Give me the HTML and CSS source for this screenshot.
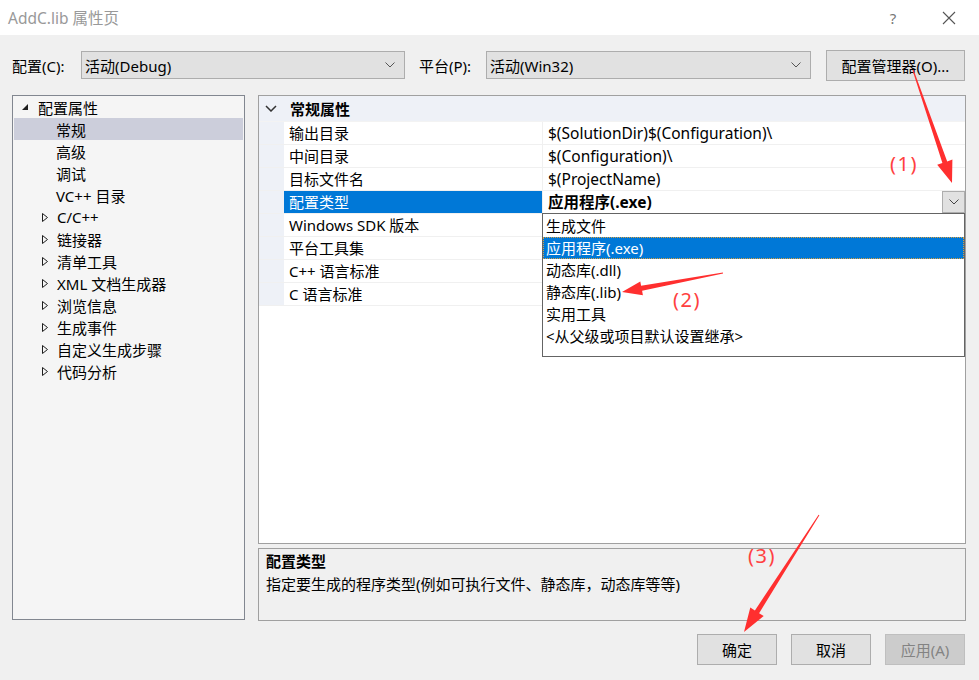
FILE: index.html
```html
<!DOCTYPE html>
<html>
<head>
  <title>AddC.lib 属性页</title>
  <link rel="stylesheet" href="styles.css">
</head>
<body>
<div class="dialog">
  <div class="titlebar">
    <span class="title">AddC.lib 属性页</span>
    <span class="tb-help">?</span>
    <span class="tb-close">
      <svg width="14" height="14" viewBox="0 0 14 14"><path d="M1 1 L13 13 M13 1 L1 13" stroke="#555" stroke-width="1.1" fill="none"/></svg>
    </span>
  </div>

  <div class="toolbar">
    <span class="label">配置(C):</span>
    <div class="combo combo-config">
      <span>活动(Debug)</span>
      <svg class="chev" width="10" height="6" viewBox="0 0 10 6"><path d="M0.5 0.5 L5 5 L9.5 0.5" stroke="#555" fill="none"/></svg>
    </div>
    <span class="label label-platform">平台(P):</span>
    <div class="combo combo-platform">
      <span>活动(Win32)</span>
      <svg class="chev" width="10" height="6" viewBox="0 0 10 6"><path d="M0.5 0.5 L5 5 L9.5 0.5" stroke="#555" fill="none"/></svg>
    </div>
    <button class="btn btn-manager">配置管理器(O)...</button>
  </div>

  <div class="main">
    <div class="tree">
      <div class="tnode root">
        <svg class="tw" width="8" height="8" viewBox="0 0 8 8"><path d="M7 1 L7 7 L1 7 Z" fill="#1e1e1e"/></svg>
        <span>配置属性</span>
      </div>
      <div class="tnode leaf selected"><span>常规</span></div>
      <div class="tnode leaf"><span>高级</span></div>
      <div class="tnode leaf"><span>调试</span></div>
      <div class="tnode leaf"><span>VC++ 目录</span></div>
      <div class="tnode branch">
        <svg class="tw" width="8" height="11" viewBox="0 0 8 11"><path d="M1.5 1.5 L6.5 5.5 L1.5 9.5 Z" fill="none" stroke="#1e1e1e"/></svg>
        <span>C/C++</span>
      </div>
      <div class="tnode branch">
        <svg class="tw" width="8" height="11" viewBox="0 0 8 11"><path d="M1.5 1.5 L6.5 5.5 L1.5 9.5 Z" fill="none" stroke="#1e1e1e"/></svg>
        <span>链接器</span>
      </div>
      <div class="tnode branch">
        <svg class="tw" width="8" height="11" viewBox="0 0 8 11"><path d="M1.5 1.5 L6.5 5.5 L1.5 9.5 Z" fill="none" stroke="#1e1e1e"/></svg>
        <span>清单工具</span>
      </div>
      <div class="tnode branch">
        <svg class="tw" width="8" height="11" viewBox="0 0 8 11"><path d="M1.5 1.5 L6.5 5.5 L1.5 9.5 Z" fill="none" stroke="#1e1e1e"/></svg>
        <span>XML 文档生成器</span>
      </div>
      <div class="tnode branch">
        <svg class="tw" width="8" height="11" viewBox="0 0 8 11"><path d="M1.5 1.5 L6.5 5.5 L1.5 9.5 Z" fill="none" stroke="#1e1e1e"/></svg>
        <span>浏览信息</span>
      </div>
      <div class="tnode branch">
        <svg class="tw" width="8" height="11" viewBox="0 0 8 11"><path d="M1.5 1.5 L6.5 5.5 L1.5 9.5 Z" fill="none" stroke="#1e1e1e"/></svg>
        <span>生成事件</span>
      </div>
      <div class="tnode branch">
        <svg class="tw" width="8" height="11" viewBox="0 0 8 11"><path d="M1.5 1.5 L6.5 5.5 L1.5 9.5 Z" fill="none" stroke="#1e1e1e"/></svg>
        <span>自定义生成步骤</span>
      </div>
      <div class="tnode branch">
        <svg class="tw" width="8" height="11" viewBox="0 0 8 11"><path d="M1.5 1.5 L6.5 5.5 L1.5 9.5 Z" fill="none" stroke="#1e1e1e"/></svg>
        <span>代码分析</span>
      </div>
    </div>

    <div class="right">
      <div class="grid">
        <div class="cat">
          <svg class="cat-chev" width="12" height="7" viewBox="0 0 12 7"><path d="M1 1 L6 6 L11 1" stroke="#333" stroke-width="1.5" fill="none"/></svg>
          <span>常规属性</span>
        </div>
        <div class="prow"><div class="pname">输出目录</div><div class="pval">$(SolutionDir)$(Configuration)\</div></div>
        <div class="prow"><div class="pname">中间目录</div><div class="pval">$(Configuration)\</div></div>
        <div class="prow"><div class="pname">目标文件名</div><div class="pval">$(ProjectName)</div></div>
        <div class="prow active">
          <div class="pname">配置类型</div>
          <div class="pval">
            <b>应用程序(.exe)</b>
            <span class="dd-btn">
              <svg width="10" height="6" viewBox="0 0 10 6"><path d="M0.5 0.5 L5 5 L9.5 0.5" stroke="#444" fill="none"/></svg>
            </span>
            <div class="dd-list">
              <div class="dd-item">生成文件</div>
              <div class="dd-item current">应用程序(.exe)</div>
              <div class="dd-item">动态库(.dll)</div>
              <div class="dd-item">静态库(.lib)</div>
              <div class="dd-item">实用工具</div>
              <div class="dd-item">&lt;从父级或项目默认设置继承&gt;</div>
            </div>
          </div>
        </div>
        <div class="prow"><div class="pname">Windows SDK 版本</div><div class="pval"></div></div>
        <div class="prow"><div class="pname">平台工具集</div><div class="pval"></div></div>
        <div class="prow"><div class="pname">C++ 语言标准</div><div class="pval"></div></div>
        <div class="prow"><div class="pname">C 语言标准</div><div class="pval"></div></div>
      </div>
      <div class="desc">
        <div class="desc-title">配置类型</div>
        <div>指定要生成的程序类型(例如可执行文件、静态库，动态库等等)</div>
      </div>
    </div>
  </div>

  <div class="footer">
    <button class="btn">确定</button>
    <button class="btn">取消</button>
    <button class="btn" disabled>应用(A)</button>
  </div>

  <!-- red annotation arrows drawn over the dialog -->
  <svg class="notes" width="979" height="680" viewBox="0 0 979 680">
    <polygon fill="#ff2f2f" points="912.5,70.2 942.4,163 937.2,164.8 952,183 952.4,159.6 947.2,161.4 913.5,69.8"/>
    <polygon fill="#ff2f2f" points="722.9,272.5 641.1,285.8 640.3,281.4 622,292 642.9,295.2 642.1,290.8 723.1,273.5"/>
    <polygon fill="#ff2f2f" points="818.6,514.7 754.9,610.5 750.3,607.5 744,632 763.7,616.1 759.1,613.2 819.4,515.3"/>
  </svg>
  <span class="note n1">(1)</span>
  <span class="note n2">(2)</span>
  <span class="note n3">(3)</span>
</div>
</body>
</html>
```

FILE: styles.css
```css
html, body {
  margin: 0;
  padding: 0;
}

body {
  font-family: "Noto Sans", "Noto Sans CJK SC", sans-serif;
  font-size: 15px;
  color: #000;
  background: #f0f0f0;
}

.dialog {
  position: relative;
  width: 979px;
  height: 680px;
  overflow: hidden;
  background: #f0f0f0;
}

/* title bar */
.titlebar {
  height: 35px;
  background: #fff;
  display: flex;
  align-items: center;
}
.title {
  margin-left: 8px;
  color: #999;
  flex: 1;
  font-size: 15.5px;
}
.tb-help {
  color: #777;
  width: 20px;
  text-align: center;
  margin-right: 39px;
}
.tb-close {
  display: flex;
  margin-right: 23px;
}

/* config / platform row */
.toolbar {
  display: flex;
  align-items: center;
  height: 60px;
  padding: 0 14px 0 12px;
}
.label {
  width: 69px;
}
.label-platform {
  margin-left: 14px;
  width: 67px;
}
.combo {
  box-sizing: border-box;
  height: 28px;
  background: #e1e1e1;
  border: 1px solid #adadad;
  display: flex;
  align-items: center;
  justify-content: space-between;
  padding: 0 9px 0 3px;
}
.combo-config {
  width: 324px;
}
.combo-platform {
  width: 325px;
}
.btn {
  box-sizing: border-box;
  font: inherit;
  height: 31px;
  background: #e1e1e1;
  border: 1px solid #adadad;
  color: #000;
  padding: 0;
}
.btn-manager {
  margin-left: 15px;
  width: 139px;
}

/* tree + grid */
.main {
  display: flex;
  align-items: flex-start;
  padding-left: 12px;
}
.tree {
  box-sizing: border-box;
  width: 233px;
  height: 525px;
  background: #f5f5f5;
  border: 1px solid #828790;
  padding: 0 1px;
}
.tnode {
  height: 22px;
  display: flex;
  align-items: center;
}
.tnode.root .tw {
  margin-left: 7px;
  margin-right: 9px;
}
.tnode.leaf {
  padding-left: 42px;
}
.tnode.branch .tw {
  margin-left: 27px;
  margin-right: 8px;
}
.tnode.selected {
  background: #cccedb;
}

.right {
  margin-left: 13px;
  width: 708px;
}
.grid {
  box-sizing: border-box;
  height: 449px;
  border: 1px solid #a0a0a0;
  background: #fff;
  position: relative;
}
.cat {
  height: 25px;
  display: flex;
  align-items: center;
  background: #eef1f7;
  font-weight: bold;
  border-bottom: 1px solid #f3f3f3;
}
.cat-chev {
  margin-left: 6px;
  margin-right: 13px;
}
.prow {
  display: flex;
  height: 22px;
  border-bottom: 1px solid #f0f0f0;
  background: #eef1f7;
  padding-left: 25px;
}
.pname {
  width: 253px;
  padding-left: 5px;
  background: #fff;
  border-right: 1px solid #f0f0f0;
  line-height: 22px;
}
.pval {
  flex: 1;
  background: #fff;
  padding-left: 5px;
  line-height: 22px;
  position: relative;
  font-size: 15.5px;
}
.prow.active .pname {
  background: #0078d7;
  color: #fff;
}
.dd-btn {
  position: absolute;
  right: 0;
  top: 0;
  box-sizing: border-box;
  width: 23px;
  height: 22px;
  background: #e1e1e1;
  border: 1px solid #adadad;
  display: flex;
  align-items: center;
  justify-content: center;
}
.dd-list {
  position: absolute;
  left: -1px;
  right: 0;
  top: 22px;
  height: 144px;
  box-sizing: border-box;
  background: #fff;
  border: 1px solid #646464;
  padding-top: 1px;
  z-index: 2;
  font-size: 15px;
}
.dd-item {
  height: 22px;
  line-height: 22px;
  padding-left: 3px;
}
.dd-item.current {
  background: #0078d7;
  color: #fff;
  outline: 1px dotted #d9a040;
  outline-offset: -1px;
}

.desc {
  box-sizing: border-box;
  margin-top: 4px;
  height: 73px;
  border: 1px solid #a0a0a0;
  padding: 1px 7px;
  line-height: 23px;
}
.desc-title {
  font-weight: bold;
}

/* bottom buttons */
.footer {
  display: flex;
  justify-content: flex-end;
  gap: 14px;
  padding: 13px 14px 0 0;
}
.footer .btn {
  width: 80px;
  height: 31px;
}
.footer .btn:disabled {
  background: #cccccc;
  border-color: #bfbfbf;
  color: #838383;
}

/* red annotations */
.notes {
  position: absolute;
  left: 0;
  top: 0;
  pointer-events: none;
  z-index: 5;
}
.note {
  position: absolute;
  z-index: 6;
  color: #ff4040;
  font-size: 20px;
  letter-spacing: 1.5px;
  font-family: "Noto Sans", sans-serif;
}
.n1 { left: 890px; top: 150px; }
.n2 { left: 673px; top: 286px; }
.n3 { left: 748px; top: 542px; }
```
